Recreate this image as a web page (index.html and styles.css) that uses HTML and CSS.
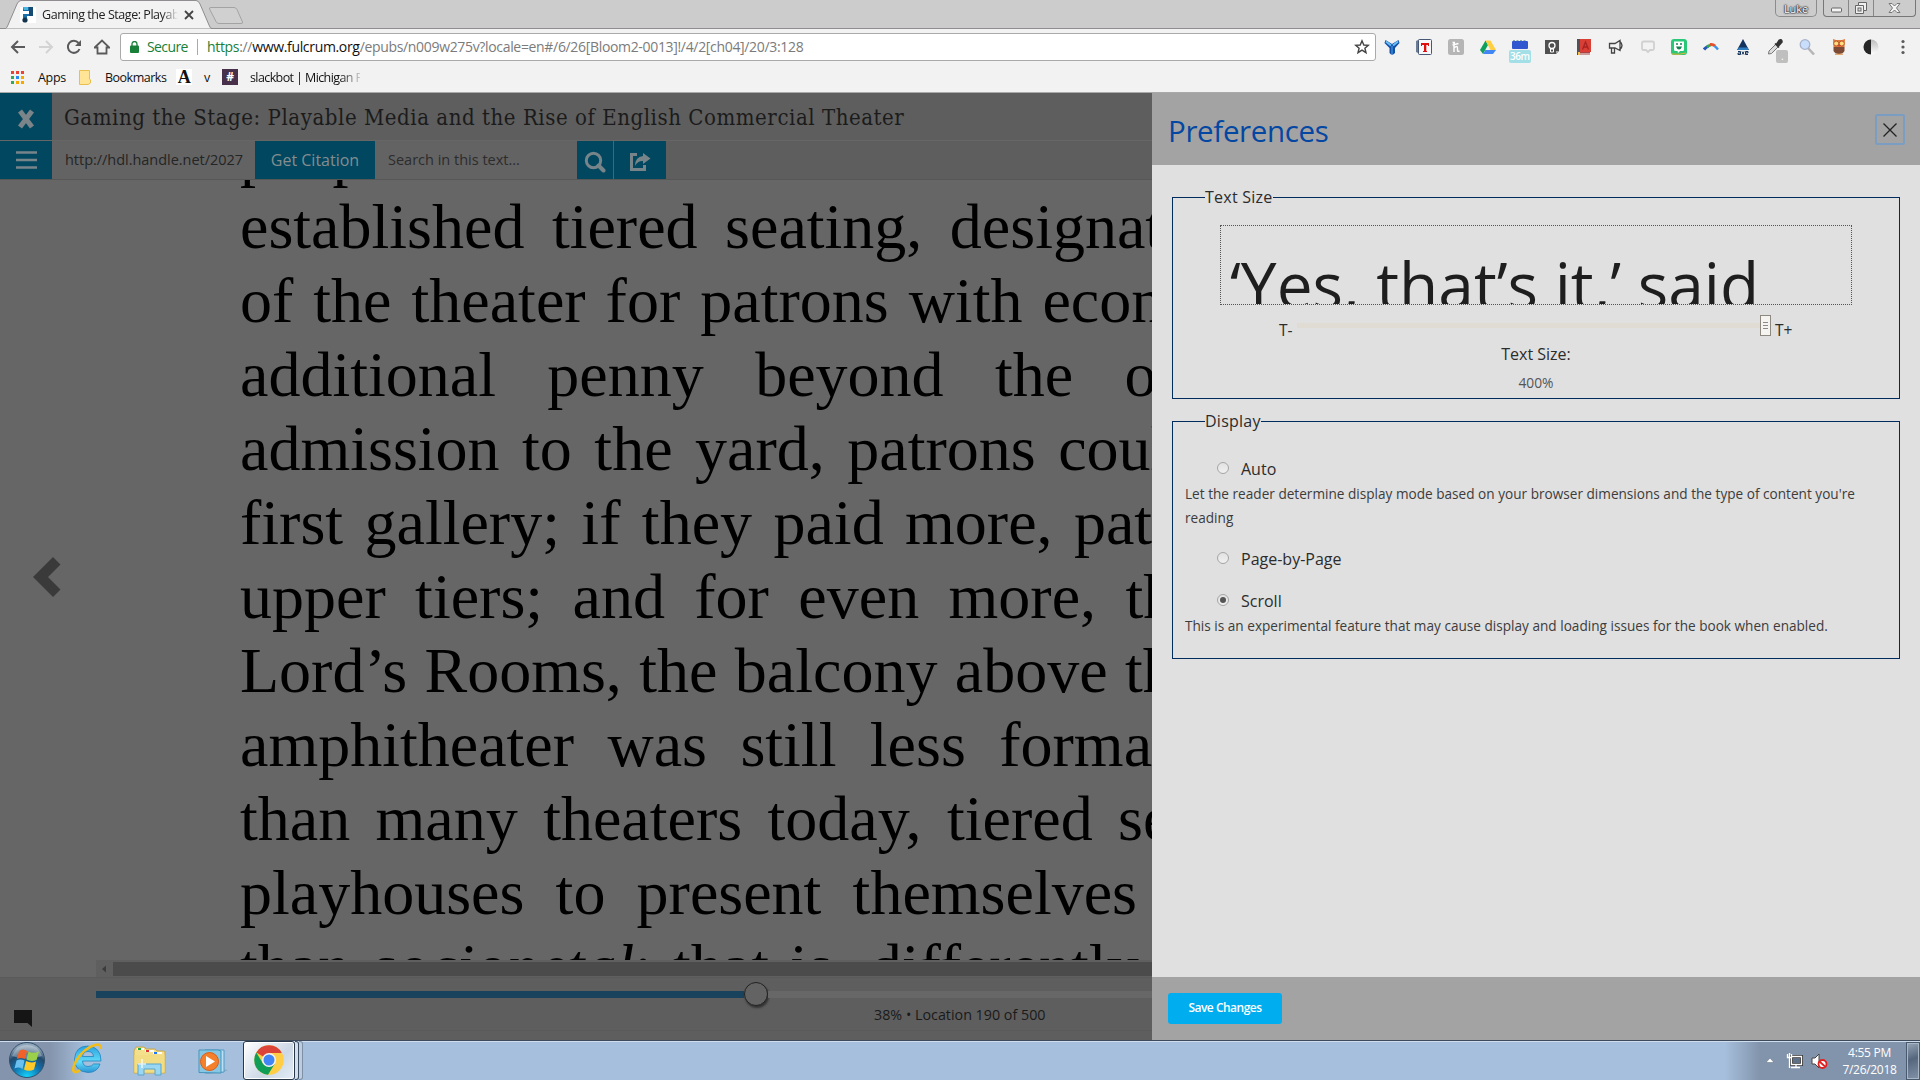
FILE: index.html
```html
<!DOCTYPE html>
<html lang="en">
<head>
<meta charset="utf-8">
<title>Gaming the Stage: Playable Media and the Rise of English Commercial Theater</title>
<link rel="stylesheet" href="styles.css">
</head>
<body>
<header class="browser">
  <div class="tabstrip">
    <svg class="tabshape" width="250" height="29" viewBox="0 0 250 29"><path d="M0 28.5H5.500Q7 28 8 25L17 4Q18.500.5 21 .5H196Q198.500.5 200 4L209 25Q210 28.500 212 28.500H250" fill="#f2f2f2" stroke="#8f8d8f"/><path d="M211 7.500H234Q236 7.500 237 9.500L242.500 22Q243 23.500 241 23.500H219Q217 23.500 216 21.500L209.500 9Q209 7.500 211 7.500Z" fill="#d0d0d0" stroke="#a3a3a3"/></svg>
    <div class="tab">
      <svg width="16" height="16" viewBox="0 0 16 16"><rect width="16" height="16" fill="#fff"/><path d="M3 0H13V9H7V11H3V7H9V4H3Z" fill="#1b6fa8"/><path d="M9 0H13V9H9Z" fill="#174a70"/><path d="M3 0H8V3H4Z" fill="#4bb5df"/><circle cx="5" cy="13" r="2.600" fill="#12334d"/></svg>
      <span class="tab-title">Gaming the Stage: Playable</span>
      <svg width="10" height="10" viewBox="0 0 10 10"><path d="M1 1L9 9M9 1L1 9" stroke="#444" stroke-width="1.800"/></svg>
    </div>
    <div class="winctl">
      <span class="user">Luke</span>
      <div class="winbtns">
        <span class="wb"><svg width="13" height="10"><rect x="1.500" y="5" width="10" height="4" rx="1" fill="#f4f4f4" stroke="#666"/></svg></span>
        <span class="wb"><svg width="14" height="14"><path d="M4.500 1.500H12.500V9.500H9.500V12.500H1.500V4.500H4.500Z" fill="#f0f0f0" stroke="#666"/><rect x="4" y="7" width="3" height="3" fill="#ddd" stroke="#666"/><path d="M4.500 4.500H9.500V9.500" fill="none" stroke="#666"/></svg></span>
        <span class="wb wide"><svg width="13" height="13"><path d="M1 1.500H4L6.500 4L9 1.500H12L8.500 6L12 10.500H9L6.500 8L4 10.500H1L4.500 6Z" fill="#f4f4f4" stroke="#777"/></svg></span>
      </div>
    </div>
  </div>
  <div class="toolbar">
    <div class="nav">
      <svg width="16" height="16" viewBox="0 0 16 16"><path d="M15 8H2.500M8 2L2 8L8 14" fill="none" stroke="#5a5a5d" stroke-width="2"/></svg>
      <svg width="16" height="16" viewBox="0 0 16 16"><path d="M1 8H13.500M8 2L14 8L8 14" fill="none" stroke="#d3d3d3" stroke-width="2"/></svg>
      <svg width="16" height="16" viewBox="0 0 16 16"><path d="M13.500 10A6 6 0 1 1 12.500 4" fill="none" stroke="#5a5a5d" stroke-width="2"/><path d="M15 1V7H9Z" fill="#5a5a5d"/></svg>
      <svg width="16" height="16" viewBox="0 0 16 16"><path d="M.7 8.500L8 1.500L15.300 8.500H12.500V14.500H3.500V8.500Z" fill="none" stroke="#5a5a5d" stroke-width="1.800"/></svg>
    </div>
    <div class="omni">
      <svg width="9" height="12" viewBox="0 0 9 12"><rect y="4.500" width="9" height="7.500" rx="1" fill="#188038"/><path d="M2 5V3A2.500 2.500 0 0 1 7 3V5" fill="none" stroke="#188038" stroke-width="1.300"/></svg>
      <span class="secure">Secure</span>
      <span class="url"><b class="g">https</b>://<b class="k">www.fulcrum.org</b>/epubs/n009w275v?locale=en#/6/26[Bloom2-0013]!/4/2[ch04]/20/3:128</span>
      <svg class="star" width="16" height="16" viewBox="0 0 16 16"><path d="M8 1.800L9.800 6L14.300 6.300L10.900 9.200L12 13.700L8 11.200L4 13.700L5.100 9.200L1.700 6.300L6.200 6Z" fill="none" stroke="#444" stroke-width="1.400"/></svg>
    </div>
    <div class="exts">
      <svg viewBox="0 0 16 16"><path d="M1.500 1L8 5L14.500 1L15.500 4L11 9V14Q8 17.500 5.500 14V9L.5 4Z" fill="#1550a8"/><path d="M2 2.500L7 6.500M14 2.500L9 6.500" stroke="#6cc0f4" stroke-width="2" fill="none"/><path d="M8 7V15" stroke="#4ba8ec"/></svg>
      <svg viewBox="0 0 16 16"><path d="M0 2L4 0V15L0 13Z" fill="#6c7c94"/><rect x="2.500" y=".5" width="13" height="15" rx="1" fill="#f5f7fa" stroke="#475875"/><path d="M5 4H13V7H12V6H10.300V12H11V13H7V12H8V6H6V7H5Z" fill="#d11"/></svg>
      <svg viewBox="0 0 16 16"><rect width="16" height="16" rx="2.500" fill="#b5b5b5"/><path d="M6 13V3M4.500 3.500H7M6 9Q9.500 6 9.500 9V11.500Q9.500 13 11.500 12M4.500 6L10.500 4.500" fill="none" stroke="#fff" stroke-width="1.400"/></svg>
      <svg viewBox="0 0 16 16"><path d="M5.500 1.500L0 11L3 15L8 6Z" fill="#11a05c"/><path d="M5.500 1.500H10.500L16 11H10.500Z" fill="#ffcf43"/><path d="M5.500 11H16L13 15H3Z" fill="#4285f4"/></svg>
      <span class="cal"><svg viewBox="0 0 16 16"><rect y="2" width="16" height="8" rx="1" fill="#3157d0"/><path d="M1 1.500H15" stroke="#8aa" stroke-dasharray="2 1.500"/></svg><em>36m</em></span>
      <svg viewBox="0 0 16 16"><path d="M1 1H15V12L12 15H1Z" fill="#505050"/><path d="M15 12L12 15V12Z" fill="#aaa"/><circle cx="8" cy="6.500" r="3" fill="none" stroke="#fff" stroke-width="1.300"/><path d="M6.500 10H9.500V13H6.500Z" fill="none" stroke="#fff"/></svg>
      <svg viewBox="0 0 16 16"><path d="M1 0H15V13H1Z" fill="#d93f35"/><path d="M1 0H4V16H1Z" fill="#51515a"/><path d="M4 13.500H14M4 15H14" stroke="#a44"/><path d="M6.500 10.500L9.500 3L12.500 10.500M8 8H11.500" stroke="#a52322" stroke-width="1.300" fill="none"/><path d="M2 13H4V16H2Z" fill="#f5c344"/></svg>
      <svg viewBox="0 0 16 16"><path d="M1.500 4.500H7L12 1.500V11.500L7 9H1.500ZM3.500 9V14H6.500V9.500M12 2.500Q16 6.500 12 10.500" fill="none" stroke="#444" stroke-width="1.300"/></svg>
      <svg viewBox="0 0 16 16"><path d="M3.500 2.500H12.500Q14 2.500 14 4V9.500Q14 11 12.500 11H10L8 13L6 11H3.500Q2 11 2 9.500V4Q2 2.500 3.500 2.500Z" fill="none" stroke="#d0d0d0" stroke-width="1.800"/></svg>
      <svg viewBox="0 0 16 16"><rect width="16" height="16" rx="3" fill="#28c878"/><path d="M3 2.500H13V11Q13 12 11.500 12H9L7 14L6.500 12H4.500Q3 12 3 10.500Z" fill="#fff"/><path d="M5 5H7M9 5H11" stroke="#168050" stroke-width="1.500"/><path d="M5 7.500H11Q10 10.500 8 10.500T5 7.500Z" fill="#168050"/><path d="M1 15Q8 16 15 14" stroke="#e8b030" fill="none"/></svg>
      <svg viewBox="0 0 16 16"><path d="M1 10.500Q2.500 8.500 5.500 7" stroke="#2457b8" stroke-width="3" fill="none"/><path d="M4 8Q5.500 6.500 8 6" stroke="#38a850" stroke-width="2.500" fill="none"/><path d="M7 5.500Q10 5 12 7" stroke="#e8502c" stroke-width="3" fill="none"/><path d="M11.500 7Q13.500 8.500 15 10.500" stroke="#3894e8" stroke-width="2.300" fill="none"/></svg>
      <svg viewBox="0 0 16 16"><path d="M8 0L14 11H2Z" fill="#14345e"/><path d="M4 8.500H12.500L14 11H2Z" fill="#2e7cc0"/><path d="M3 12.500H5.500V15.500H3V14H5M7 12.500L9 15.500M9 12.500L7 15.500M13 15.500H10.500V12.500H13V14H11" stroke="#14345e" fill="none"/></svg>
      <span class="picker"><svg viewBox="0 0 16 16"><path d="M1.500 15L2 12L9 5L11.500 7.500L4.500 14.500Z" fill="#ddd" stroke="#777"/><path d="M8 4.500L12 8.500M9.500 5.500L12 1.500Q15-.5 15 3L11.500 7Z" stroke="#333" stroke-width="1.600" fill="#333"/></svg><em>.</em></span>
      <svg viewBox="0 0 16 16"><path d="M9 9L15 15.500" stroke="#b5b5b8" stroke-width="2.500"/><circle cx="6" cy="5.500" r="4.800" fill="#c8defa" stroke="#a7b3cc" stroke-width="1.300"/></svg>
      <svg viewBox="0 0 16 16"><path d="M2 0L5 1H11L14 0L13.500 8H2.500Z" fill="#dd7c3c"/><path d="M2.500 8H13.500V12Q12 15 8 15T2.500 12Z" fill="#7d4a35"/><circle cx="5.200" cy="4.500" r="2.500" fill="#ffe080" stroke="#c0562b"/><circle cx="10.800" cy="4.500" r="2.500" fill="#ffe080" stroke="#c0562b"/><path d="M7 6H9L8 8Z" fill="#c33"/><path d="M4 15.200H12" stroke="#d88a3c"/></svg>
      <svg viewBox="0 0 16 16"><defs><linearGradient id="half" x2="0" y2="1"><stop stop-color="#bbb"/><stop offset="1" stop-color="#fff"/></linearGradient></defs><circle cx="8" cy="8" r="7.500" fill="url(#half)"/><path d="M8 .5A7.500 7.500 0 0 0 8 15.500Z" fill="#262626"/></svg>
      <svg viewBox="0 0 16 16"><circle cx="8" cy="2.500" r="1.600" fill="#5a5a5d"/><circle cx="8" cy="8" r="1.600" fill="#5a5a5d"/><circle cx="8" cy="13.500" r="1.600" fill="#5a5a5d"/></svg>
    </div>
  </div>
  <div class="bookmarks">
    <svg class="apps" width="13" height="13" viewBox="0 0 13 13"><path d="M0 0H3V3H0ZM5 0H8V3H5ZM10 0H13V3H10Z" fill="#ea4335"/><path d="M0 5H3V8H0ZM0 10H3V13H0Z" fill="#34a853"/><path d="M5 5H8V8H5Z" fill="#2a8bf2"/><path d="M5 10H8V13H5ZM10 5H13V8H10ZM10 10H13V13H10Z" fill="#f4a800"/></svg>
    <span class="b-apps">Apps</span>
    <svg class="folder" width="12" height="15" viewBox="0 0 12 15"><path d="M.5.5H10.500V9L11.500 10V13L9 14.500H.5Z" fill="#ffe595" stroke="#e8c050"/></svg>
    <span class="b-book">Bookmarks</span>
    <span class="a-icon">A</span>
    <span class="b-v">v</span>
    <span class="hash">#</span>
    <span class="slackbot">slackbot | Michigan P</span>
  </div>
</header>

<main class="app">
  <section class="reader">
    <div class="row1">
      <span class="sq close"><svg width="16" height="20" viewBox="0 0 16 20"><path d="M2 2L14 18M14 2L2 18" stroke="#7b8488" stroke-width="5"/></svg></span>
      <h1>Gaming the Stage: Playable Media and the Rise of English Commercial Theater</h1>
    </div>
    <div class="row2">
      <span class="sq"><svg width="21" height="18" viewBox="0 0 21 18"><path d="M0 1.500H21M0 9H21M0 16.500H21" stroke="#77858a" stroke-width="2.600"/></svg></span>
      <span class="handle">http://hdl.handle.net/2027</span>
      <span class="cite">Get Citation</span>
      <span class="search">Search in this text...</span>
      <span class="mag"><svg width="22" height="22" viewBox="0 0 22 22"><circle cx="9.500" cy="9.500" r="7.200" fill="none" stroke="#77858a" stroke-width="3"/><path d="M14.500 14.500L19.500 19.500" stroke="#77858a" stroke-width="4" stroke-linecap="round"/></svg></span>
      <span class="share"><svg width="22" height="20" viewBox="0 0 22 20"><path d="M8 2.500H2.500V17.500H15.500V13" fill="none" stroke="#77858a" stroke-width="3"/><path d="M14 1L21.500 6.500L14 12V9Q9 8.500 6 14Q6 5 14 4Z" fill="#77858a"/></svg></span>
    </div>
    <div class="page">
      <svg class="prev" width="28" height="40" viewBox="0 0 28 40"><path d="M20 0L27.500 7.500L15 20L27.500 32.500L20 40L0 20Z" fill="#3a3a3a"/></svg>
      <div class="text">
        <p class="l0">people</p>
        <p class="l1">established tiered seating, designated</p>
        <p class="l2">of the theater for patrons with economic</p>
        <p class="l3">additional penny beyond the one</p>
        <p class="l4">admission to the yard, patrons could</p>
        <p class="l5">first gallery; if they paid more, patrons</p>
        <p class="l6">upper tiers; and for even more, the</p>
        <p class="l7">Lord’s Rooms, the balcony above the</p>
        <p class="l8">amphitheater was still less formal</p>
        <p class="l9">than many theaters today, tiered seats</p>
        <p class="l10">playhouses to present themselves</p>
        <p class="l11">than <i>sociopetal</i>; that is, differently</p>
      </div>
    </div>
    <div class="hscroll"><svg width="17" height="14" viewBox="0 0 17 14"><path d="M10 3.500V10.500L6 7Z" fill="#3c3c3c"/></svg><span></span></div>
    <div class="foot">
      <div class="progress"><span class="done"></span><span class="knob"></span><span class="rest"></span></div>
      <div class="status">
        <svg width="18" height="17" viewBox="0 0 18 17"><path d="M0 0H18V17L13.500 13H0Z" fill="#151515"/></svg>
        <span>38% • Location 190 of 500</span>
      </div>
    </div>
  </section>

  <aside class="panel">
    <div class="phead">
      <h2>Preferences</h2>
      <span class="x"><svg width="14" height="14" viewBox="0 0 14 14"><path d="M.5.5L13.500 13.500M13.500.5L.5 13.500" stroke="#222" stroke-width="1.300"/></svg></span>
    </div>
    <div class="pbody">
      <fieldset class="size">
        <legend>Text Size</legend>
        <div class="preview">‘Yes, that’s it,’ said</div>
        <div class="range"><span>T-</span><i class="track"></i><i class="thumb"><svg width="5" height="8" viewBox="0 0 5 8"><path d="M0 .5H5M0 3.500H5M0 6.500H5" stroke="#8a8a8a"/></svg></i><span class="plus">T+</span></div>
        <div class="cap">Text Size:</div>
        <div class="pct">400%</div>
      </fieldset>
      <fieldset class="display">
        <legend>Display</legend>
        <div class="opt"><i class="radio"></i>Auto</div>
        <div class="desc">Let the reader determine display mode based on your browser dimensions and the type of content you're<br>reading</div>
        <div class="opt second"><i class="radio"></i>Page-by-Page</div>
        <div class="opt third"><i class="radio on"></i>Scroll</div>
        <div class="desc last">This is an experimental feature that may cause display and loading issues for the book when enabled.</div>
      </fieldset>
    </div>
    <div class="pfoot"><span class="save">Save Changes</span></div>
  </aside>
</main>

<footer class="taskbar">
  <svg class="orb" width="36" height="36" viewBox="0 0 36 36"><defs><radialGradient id="o" cx=".5" cy="1" r=".9"><stop offset="0" stop-color="#16d8ff"/><stop offset=".45" stop-color="#0f74b0"/><stop offset=".75" stop-color="#23496b"/><stop offset="1" stop-color="#8fa6ba"/></radialGradient></defs><circle cx="18" cy="18" r="17.500" fill="url(#o)" stroke="#33506c"/><path d="M3 14Q7 3 18 3T33 14Q18 19 3 14Z" fill="#fff" opacity=".3"/><path d="M10 9Q14 6 18 9L16 17Q12 15 8 17Z" fill="#f0622a"/><path d="M19.500 9.500Q24 12 30 9.500L27.500 18Q22 20 17.500 17.500Z" fill="#9bd04a"/><path d="M7.500 18.500Q11 16.500 15.500 18.500L13.500 27Q10 24.500 5.500 26.500Z" fill="#6ac0ee"/><path d="M17 19Q22 21.500 27 19.500L25 27.500Q20 30 15 27.500Z" fill="#ffc928"/></svg>
  <svg class="ie" width="32" height="32" viewBox="0 0 32 32"><defs><linearGradient id="e" x2="0" y2="1"><stop stop-color="#2aa2e0"/><stop offset=".6" stop-color="#62dcfa"/><stop offset="1" stop-color="#2b92d2"/></linearGradient></defs><path fill-rule="evenodd" d="M30 19H11.500Q12 24.500 17 24.500Q21 24.500 22.500 22H29Q26.500 30.500 17 30.500Q3.500 29.500 3.500 17Q4.500 4 17 4Q30 5 30 19ZM11.500 14.500H22.500Q22 9.500 17 9.500T11.500 14.500Z" fill="url(#e)" stroke="#2183bb" stroke-width=".8"/><path d="M29.500 7Q30 1 24 3Q13 6 5 19Q0 29 4 30Q6 30.500 9 28" fill="none" stroke="#f3bd19" stroke-width="2.600"/></svg>
  <svg class="explorer" width="34" height="30" viewBox="0 0 34 30"><path d="M2 3Q2 1 4 1H11L13 3H22L24 5H31Q32 5 32 7V27H1V5Z" fill="#f3df8c" stroke="#c9a94f"/><path d="M4 2H11V4H4ZM12 4H21V6H12ZM20 6H29V8H20Z" fill="#fff"/><path d="M5 2H8V4H5Z" fill="#1fa83b"/><path d="M13 4H16V6H13Z" fill="#d33"/><path d="M21 6H24V8H21Z" fill="#27f"/><path d="M1.500 9H31.500V26.500H1.500Z" fill="#f2dd85"/><path d="M5 29V18H28V29H22V23H11V29Z" fill="#9ad7f2" stroke="#5aa5cc"/><path d="M9 13V22M5 18H13" stroke="#fff" stroke-width="1.500" opacity=".8"/></svg>
  <svg class="wmp" width="30" height="27" viewBox="0 0 30 27"><path d="M7 26L24 25L30 22L24 21Z" fill="#8097b0" opacity=".6"/><path d="M7 2H26V24L7 25Z" fill="#b9e0f5" stroke="#4f9dc4"/><path d="M1 2H20L23 3V25L1 24.500Z" fill="#86c8e4" stroke="#4595be"/><circle cx="11.500" cy="13.500" r="9" fill="#f4802b" stroke="#e05c12"/><path d="M8 8V19L17 13.500Z" fill="#fff"/></svg>
  <div class="chrome"><svg width="30" height="30" viewBox="0 0 30 30"><circle cx="15" cy="15" r="14.700" fill="#ffce44"/><path d="M15 15L2.300 7.500A14.700 14.700 0 0 1 27.800 8H15Z" fill="#db4437"/><path d="M2.300 7.500A14.700 14.700 0 0 0 14 29.700L21 18.500L9 18.500Z" fill="#0f9d58"/><circle cx="15" cy="15" r="7" fill="#f4f4f4"/><circle cx="15" cy="15" r="5.500" fill="#4285f4"/></svg></div>
  <i class="stack"></i><i class="stack s2"></i>
  <div class="tray">
    <svg width="8" height="5" viewBox="0 0 8 5"><path d="M0 4.500L4 0L8 4.500Z" fill="#fff" stroke="#456" stroke-width=".4"/></svg>
    <svg class="net" width="17" height="16" viewBox="0 0 17 16"><path d="M5.500 3.500H15.500V11.500H5.500Z" fill="#5f7188" stroke="#333" stroke-width="3"/><path d="M5.500 3.500H15.500V11.500H5.500ZM10 12V14M5 14.500H14M1.500 1V4.500H5.500V1M3.500 0V15" fill="none" stroke="#fff" stroke-width="1.300"/></svg>
    <svg class="vol" width="17" height="16" viewBox="0 0 17 16"><path d="M1 5H4L8 1V15L4 11H1Z" fill="#fff" stroke="#444"/><circle cx="11.500" cy="11" r="4" fill="#fff" stroke="#e02020" stroke-width="1.800"/><path d="M8.500 8.500L14 13.500" stroke="#e02020" stroke-width="1.800"/></svg>
    <div class="clock"><span class="time">4:55 PM</span><span>7/26/2018</span></div>
    <i class="peek"></i>
  </div>
</footer>
</body>
</html>
```
FILE: styles.css
```css
* { box-sizing: border-box; margin: 0; padding: 0; }
body { width: 1920px; height: 1080px; overflow: hidden; display: flex; flex-direction: column; font-family: "Open Sans", "Noto Sans", sans-serif; font-size: 13px; }
svg { display: block; flex: none; }
span, i { flex: none; }

/* Browser chrome */
.browser { height: 93px; background: #f2f2f2; border-bottom: 1px solid #a9a9a9; color: #222; }
.tabstrip { height: 29px; background: #ccc; border-bottom: 1px solid #8f8d8f; display: flex; position: relative; justify-content: flex-end; }
.tabshape { position: absolute; left: 0; top: 0; }
.tab { position: absolute; left: 20px; top: 7px; display: flex; align-items: center; height: 16px; }
.tab-title { width: 136px; margin: 0 6px 0 6px; padding-bottom: 1px; overflow: hidden; white-space: nowrap; font-size: 12.5px; letter-spacing: -.45px; -webkit-mask-image: linear-gradient(90deg, #000 120px, transparent 136px); }
.winctl { display: flex; gap: 6px; height: 17px; padding-right: 4px; }
.user { width: 42px; height: 17px; border: 1px solid #8c8c8c; border-top: 0; border-radius: 0 0 5px 5px; text-align: center; color: #fff; font-size: 11px; line-height: 17px; letter-spacing: -.1px; text-shadow: 0 0 1px #222, 0 0 1px #222, 0 0 2px #333, 0 0 2px #333; }
.winbtns { display: flex; width: 93px; height: 17px; border: 1px solid #777; border-top: 0; border-radius: 0 0 4px 4px; }
.wb { width: 25px; display: flex; align-items: center; justify-content: center; border-right: 1px solid #888; }
.wb.wide { flex: 1; border: 0; }
.toolbar { height: 35px; display: flex; align-items: center; padding-left: 10px; }
.nav { display: flex; gap: 12px; width: 110px; }
.omni { width: 1256px; height: 28px; border: 1px solid #aaa; border-radius: 3px; background: #fff; display: flex; align-items: center; padding-left: 9px; font-size: 14px; margin-top: 1px; padding-bottom: 1px; }
.omni b { font-weight: 400; }
.secure { color: #188038; margin-left: 8px; height: 16px; line-height: 15px; width: 51px; border-right: 1px solid #aaa; letter-spacing: -.6px; white-space: nowrap; }
.url { margin-left: 9px; color: #7b7b7b; letter-spacing: -.33px; }
.g { color: #188038; }
.k { color: #111; }
.star { margin-left: auto; margin-right: 5px; }
.exts { display: flex; width: 544px; justify-content: space-between; padding: 0 9px 0 8px; }
.exts svg { width: 16px; height: 16px; }
.cal, .picker { position: relative; }
.exts em { position: absolute; font-style: normal; color: #fff; line-height: 12px; text-align: center; border-radius: 2px; }
.cal em { left: -3px; top: 11px; width: 22px; height: 13px; background: #a2dfe6; font-size: 10px; font-weight: 600; letter-spacing: -.5px; }
.picker em { left: 9px; top: 11px; width: 12px; height: 13px; background: #bfbfbf; font-size: 10px; }
.bookmarks { height: 26px; display: flex; align-items: center; padding-left: 11px; white-space: nowrap; font-size: 12.5px; letter-spacing: -.3px; color: #111; }
.b-apps { margin-left: 14px; width: 28px; }
.folder { margin-left: 13px; }
.b-book { margin-left: 14px; width: 59px; letter-spacing: -.5px; }
.a-icon { margin-left: 12px; width: 16px; height: 16px; background: #fff; font: bold 18px/16px "Liberation Serif", serif; text-align: center; }
.b-v { margin-left: 12px; width: 7px; }
.hash { margin-left: 11px; width: 16px; height: 16px; background: #48304a; color: #fff; font-weight: 700; font-size: 12px; line-height: 16px; text-align: center; }
.slackbot { margin-left: 12px; width: 110px; overflow: hidden; letter-spacing: -.6px; -webkit-mask-image: linear-gradient(90deg, #000 90px, transparent 114px); }

/* Reader behind the dimming layer */
.app { height: 947px; display: flex; }
.reader { width: 1152px; height: 947px; background: #5e5e5e; display: flex; flex-direction: column; overflow: hidden; }
.row1 { height: 48px; display: flex; border-bottom: 1px solid #666; align-items: stretch; }
.sq { width: 52px; background: #00475f; display: flex; align-items: center; justify-content: center; }
.close { padding-top: 4px; }
h1 { margin-left: 12px; font: 400 22px/49px "DejaVu Serif Condensed", "DejaVu Serif", serif; font-stretch: condensed; letter-spacing: .55px; color: #1b1b1b; white-space: nowrap; }
.row2 { height: 39px; display: flex; border-bottom: 1px solid #575757; font-size: 15px; line-height: 38px; white-space: nowrap; }
.handle { width: 203px; padding-left: 13px; background: #636363; color: #252525; font-size: 14.5px; letter-spacing: -.03px; }
.cite { width: 120px; text-align: center; background: #00475f; color: #848d90; font-size: 16px; }
.search { width: 202px; padding-left: 13px; background: #636363; color: #2c2c2c; font-size: 14.5px; }
.mag, .share { display: flex; align-items: center; justify-content: center; background: #00475f; padding-top: 3px; }
.mag { width: 36px; }
.share { margin-left: 1px; width: 52px; }
.page { height: 780px; background: #666; overflow: hidden; display: flex; }
.prev { margin: 377px 0 0 33px; }
.text { margin: -64px 0 0 179px; font: 64px/74px "Liberation Serif", "Times New Roman", serif; color: #000; white-space: nowrap; }
.l1 { word-spacing: 11.5px; }
.l2 { word-spacing: 4px; }
.l3 { word-spacing: 35.4px; }
.l4 { word-spacing: 6.5px; }
.l5 { word-spacing: 5.4px; }
.l6 { word-spacing: 13.4px; }
.l7 { word-spacing: 1.4px; }
.l8 { word-spacing: 17.4px; }
.l9 { word-spacing: 9.4px; }
.l10 { word-spacing: 15.2px; }
.l11 { word-spacing: 5px; }
.hscroll { height: 17px; background: linear-gradient(90deg, #666 96px, #5f5f5f 96px); padding: 2px 0 1px 96px; display: flex; }
.hscroll span { flex: 1; background: #4b4b4b; }
.foot { height: 63px; border-top: 1px solid #5a5a5a; }
.progress { display: flex; align-items: center; height: 32px; padding-left: 96px; }
.done { width: 648px; height: 7px; background: #19425c; }
.knob { width: 24px; height: 24px; border-radius: 50%; background: #636363; border: 1px solid #222; box-shadow: 1px 2px 2px #333; }
.rest { flex: 1; height: 7px; background: #676767; }
.status { height: 21px; border-bottom: 1px solid #5a5a5a; display: flex; padding-left: 14px; color: #1a1a1a; font-size: 14.3px; line-height: 19px; white-space: nowrap; }
.status span { margin: -5px 0 0 842px; }

/* Preferences panel */
.panel { width: 768px; height: 947px; background: #e0e0e0; display: flex; flex-direction: column; color: #2c2c2c; }
.phead { height: 72px; background: #a3a3a3; display: flex; align-items: center; justify-content: space-between; padding: 0 15px 0 16px; }
h2 { font-weight: 400; font-size: 29.5px; line-height: 40px; letter-spacing: -.35px; color: #0347a2; padding-top: 3px; }
.x { width: 30px; height: 31px; border: 2px solid #7c9dc2; border-radius: 2px; display: flex; align-items: center; justify-content: center; margin-top: 1px; }
.pbody { height: 812px; padding: 20px 20px 0; }
fieldset { border: 1px solid #002b5c; white-space: nowrap; }
legend { margin-left: 32px; font-size: 16px; line-height: 24px; font-weight: 500; letter-spacing: .25px; }
.size { height: 214px; }
.preview { margin: 16px 47px 0; height: 80px; border: 1px dotted #555; overflow: hidden; padding-left: 9px; font-size: 64px; line-height: 118px; color: #1e1e1e; }
.range { height: 32px; display: flex; align-items: center; margin: 5px 0 0 106px; font-size: 15.5px; line-height: 20px; }
.range span { width: 18px; padding-top: 7px; }
.track { width: 463px; height: 5px; background: #e0dbd3; margin-bottom: 1px; }
.thumb { width: 11px; height: 21px; border: 1px solid #8d8880; background: #f6f4f0; display: flex; align-items: center; justify-content: center; margin: 0 4px 1px 0; }
.cap { text-align: center; font-size: 16px; line-height: 24px; }
.pct { text-align: center; font-size: 13.8px; line-height: 24px; margin-top: 5px; color: #555; }
.display { height: 250px; margin-top: 10px; }
.opt { display: flex; align-items: center; height: 24px; font-size: 16px; margin: 24px 0 0 44px; }
.radio { width: 12px; height: 12px; border: 1px solid #a5a5a5; border-radius: 50%; background: linear-gradient(#e2e2e2, #f0f0f0); margin: 0 12px 2px 0; display: flex; align-items: center; justify-content: center; }
.radio.on::after { content: ""; width: 6px; height: 6px; border-radius: 50%; background: #555; }
.desc { font-size: 13.6px; line-height: 24px; margin: 1px 0 -1px 12px; letter-spacing: .01px; color: #3c3c3c; }
.second { margin-top: 18px; }
.third { margin-top: 18px; }
.pfoot { height: 63px; background: #a3a3a3; padding: 16px; }
.save { display: block; width: 114px; height: 31px; background: #00adee; border-radius: 3px; color: #fff; text-align: center; font-size: 12px; font-weight: 600; line-height: 29px; letter-spacing: -.5px; }

/* Taskbar */
.taskbar { height: 40px; display: flex; border-top: 1px solid #3c4a5c; background: linear-gradient(90deg, #8494ac 50px, #a6bfdc 86px, #a6bfdc 1725px, #8294ac 1760px); box-shadow: inset 0 1px #d0ddec; }
.orb { margin: 1px 0 0 9px; }
.ie { margin: 1px 0 0 26px; }
.explorer { margin: 5px 0 0 30px; }
.wmp { margin: 7px 0 0 31px; }
.chrome { width: 52px; height: 39px; margin-left: 15px; border: 1px solid #283848; border-radius: 3px; background: linear-gradient(135deg, #fff, #ccd8e6 60%, #e4edf6); display: flex; align-items: center; justify-content: center; box-shadow: inset 0 0 0 1px #fff; padding-bottom: 1px; }
.stack { width: 4px; height: 39px; border: 1px solid #39495c; border-left: 0; border-radius: 0 3px 3px 0; background: #d3dfec; }
.s2 { background: #bccde1; border-color: #7e90a6; }
.tray { margin-left: auto; display: flex; align-items: center; color: #fff; }
.net { margin-left: 12px; }
.vol { margin: 0 5px 0 8px; }
.clock { display: flex; flex-direction: column; align-items: center; width: 73px; font-size: 12px; line-height: 17px; letter-spacing: -.3px; }
.peek { width: 14px; height: 38px; border: 1px solid #4a5a6e; background: linear-gradient(160deg, #97a5b7, #55667d 45%, #8293a9); box-shadow: inset 0 0 0 1px #a9b6c6; }
```
